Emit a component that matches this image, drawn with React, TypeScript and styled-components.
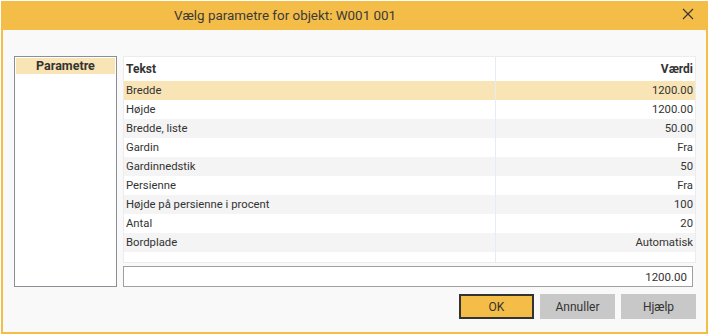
import React from 'react';
import styled, { createGlobalStyle } from 'styled-components';

const GlobalStyle = createGlobalStyle`
  html, body {
    margin: 0;
    padding: 0;
    background: #ffffff;
  }
  body {
    font-family: Roboto, "Liberation Sans", sans-serif;
    color: #333;
  }
`;

const ORANGE = '#F4BD48';

const Page = styled.div`
  padding: 1px 0 0 1px;
  width: 710px;
  height: 335px;
  box-sizing: border-box;
`;

const Window = styled.div`
  width: 707px;
  height: 333px;
  box-sizing: border-box;
  border: 2px solid ${ORANGE};
  border-top: none;
  background: #f9f9f9;
  display: flex;
  flex-direction: column;
`;

const TitleBar = styled.div`
  height: 29px;
  background: ${ORANGE};
  display: flex;
  align-items: center;
  padding-left: 171px;
  padding-right: 12px;
  font-size: 13.4px;
  color: #3a3a3a;
`;

const Title = styled.div`
  flex: 1;
`;

const CloseButton = styled.div`
  width: 12px;
  height: 12px;
  display: flex;
  margin-top: -3px;
`;

const Body = styled.div`
  flex: 1;
  display: flex;
  flex-direction: column;
  padding: 26px 10px 11px 11px;
`;

const Main = styled.div`
  display: flex;
  gap: 6px;
`;

const SidePanel = styled.div`
  width: 103px;
  height: 231px;
  box-sizing: border-box;
  border: 1px solid #8b8e95;
  background: #fff;
  padding: 1px;
`;

const SideHeader = styled.div`
  height: 16px;
  background: #f9e4b5;
  font-weight: 700;
  font-size: 12.5px;
  text-align: center;
  line-height: 16px;
  color: #333;
`;

const RightColumn = styled.div`
  flex: 1;
  display: flex;
  flex-direction: column;
  gap: 3px;
`;

const Grid = styled.div`
  height: 207px;
  box-sizing: border-box;
  border: 1px solid #ececec;
  background: #fff;
  display: flex;
  flex-direction: column;
`;

const Row = styled.div<{ $bg?: string; $height?: number }>`
  display: grid;
  grid-template-columns: 371px 1fr;
  height: ${(p) => (p.$height ? `${p.$height}px` : 'auto')};
  flex: ${(p) => (p.$height ? 'none' : '1')};
  background: ${(p) => p.$bg || '#fff'};
  font-size: 11.3px;
`;

const Cell = styled.div<{ $right?: boolean; $bold?: boolean }>`
  display: flex;
  align-items: center;
  justify-content: ${(p) => (p.$right ? 'flex-end' : 'flex-start')};
  padding: ${(p) => (p.$right ? '0 2px 0 0' : '0 0 0 2px')};
  font-weight: ${(p) => (p.$bold ? 700 : 400)};
  font-size: ${(p) => (p.$bold ? '12px' : 'inherit')};
  border-left: ${(p) => (p.$right ? '1px solid #e6ecf3' : 'none')};
  white-space: nowrap;
`;

const ValueInput = styled.div`
  height: 21px;
  width: 570px;
  box-sizing: border-box;
  border: 1px solid #a0a0a0;
  background: #fff;
  display: flex;
  align-items: center;
  justify-content: flex-end;
  padding-right: 5px;
  font-size: 11.5px;
`;

const ButtonRow = styled.div`
  display: flex;
  justify-content: flex-end;
  gap: 6px;
  margin-top: 7px;
`;

const Button = styled.div<{ $primary?: boolean }>`
  width: 75px;
  height: 25px;
  box-sizing: border-box;
  display: flex;
  align-items: center;
  justify-content: center;
  font-size: 12px;
  color: #333;
  background: ${(p) => (p.$primary ? ORANGE : '#c8c8c8')};
  border: ${(p) => (p.$primary ? '2px solid #333' : 'none')};
`;

const rows: [string, string][] = [
  ['Bredde', '1200.00'],
  ['Højde', '1200.00'],
  ['Bredde, liste', '50.00'],
  ['Gardin', 'Fra'],
  ['Gardinnedstik', '50'],
  ['Persienne', 'Fra'],
  ['Højde på persienne i procent', '100'],
  ['Antal', '20'],
  ['Bordplade', 'Automatisk'],
];

const rowBg = (i: number) => {
  if (i === 0) return '#f9e4b5';
  return i % 2 === 0 ? '#f4f4f4' : '#fff';
};

const App = () => {
  return (
    <Page>
      <GlobalStyle />
      <Window>
        <TitleBar>
          <Title>Vælg parametre for objekt: W001 001</Title>
          <CloseButton>
            <svg width="12" height="12" viewBox="0 0 12 12">
              <path d="M1 1 L11 11 M11 1 L1 11" stroke="#333" strokeWidth="1.1" />
            </svg>
          </CloseButton>
        </TitleBar>
        <Body>
          <Main>
            <SidePanel>
              <SideHeader>Parametre</SideHeader>
            </SidePanel>
            <RightColumn>
              <Grid>
                <Row $height={24}>
                  <Cell $bold>Tekst</Cell>
                  <Cell $bold $right>Værdi</Cell>
                </Row>
                {rows.map(([label, value], i) => (
                  <Row key={label} $height={19} $bg={rowBg(i)}>
                    <Cell>{label}</Cell>
                    <Cell $right>{value}</Cell>
                  </Row>
                ))}
                <Row>
                  <Cell />
                  <Cell $right />
                </Row>
              </Grid>
              <ValueInput>1200.00</ValueInput>
            </RightColumn>
          </Main>
          <ButtonRow>
            <Button $primary>OK</Button>
            <Button>Annuller</Button>
            <Button>Hjælp</Button>
          </ButtonRow>
        </Body>
      </Window>
    </Page>
  );
};

export default App;
